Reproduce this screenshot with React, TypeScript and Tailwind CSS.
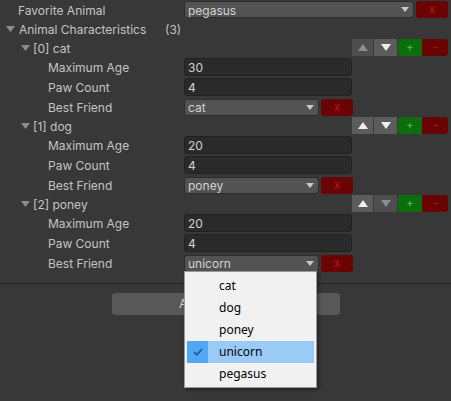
import React from "react";

const Tri = ({ down = true, color }: { down?: boolean; color: string }) => (
  <svg width="10" height="7" viewBox="0 0 10 7">
    {down ? <polygon points="0,0 10,0 5,7" fill={color} /> : <polygon points="0,7 10,7 5,0" fill={color} />}
  </svg>
);

const FoldTri = () => (
  <svg width="9" height="6" viewBox="0 0 9 6" className="shrink-0">
    <polygon points="0,0 9,0 4.5,6" fill="#8c8c8c" />
  </svg>
);

const Dropdown = ({ value, w }: { value: string; w: string }) => (
  <div className={`${w} h-[17px] bg-[#535353] border border-[#2c2c2c] rounded-[3px] flex items-center pl-[3px] pr-[4px] text-[#d2d2d2]`}>
    <span className="flex-1 leading-none pt-[2px]">{value}</span>
    <svg width="8" height="5" viewBox="0 0 8 5"><polygon points="0,0 8,0 4,5" fill="#c8c8c8" /></svg>
  </div>
);

const XBtn = ({ w }: { w: string }) => (
  <div className={`${w} h-[17px] ml-[2px] bg-[#6a0303] rounded-[3px] flex items-center justify-center text-[#c41212] text-[11px] leading-none`}>x</div>
);

const Field = ({ value }: { value: string }) => (
  <div className="w-[168px] h-[18px] bg-[#2a2a2a] border border-[#212121] rounded-[3px] flex items-center pl-[3px] pt-[2px] text-[#d2d2d2] leading-none">{value}</div>
);

const Row = ({ label, children, cls }: { label: string; children: React.ReactNode; cls: string }) => (
  <div className={`flex items-center h-[18px] ${cls}`}>
    <div className="w-[184px] pl-[48px] pt-[2px] text-[#c4c4c4] leading-none">{label}</div>
    {children}
  </div>
);

const Element = ({
  idx, name, age, paw, friend, upOn, downOn, first,
}: { idx: number; name: string; age: string; paw: string; friend: string; upOn: boolean; downOn: boolean; first: boolean }) => (
  <>
    <div className={`flex items-center h-[17px] ${first ? "mt-[2px]" : "mt-[1px]"}`}>
      <div className="pl-[21px] flex items-center gap-[3px] text-[#c4c4c4] leading-none">
        <FoldTri />
        <span className="pt-[2px]">[{idx}] {name}</span>
      </div>
      <div className="ml-auto mr-[3px] flex h-[17px]">
        <div className={`w-[21px] flex items-center justify-center ${upOn ? "bg-[#5c5c5c]" : "bg-[#4e4e4e]"}`}>
          <Tri down={false} color={upOn ? "#eeeeee" : "#8e8e8e"} />
        </div>
        <div className={`w-[23px] ml-[1px] flex items-center justify-center ${downOn ? "bg-[#5c5c5c]" : "bg-[#4e4e4e]"}`}>
          <Tri down color={downOn ? "#eeeeee" : "#8e8e8e"} />
        </div>
        <div className="w-[24px] ml-[1px] bg-[#0c6e0c] rounded-l-[3px] flex items-center justify-center text-[#3fd83f] text-[11px] leading-none">+</div>
        <div className="w-[26px] bg-[#6a0303] rounded-r-[3px] flex items-center justify-center text-[#c41212] text-[11px] leading-none">-</div>
      </div>
    </div>
    <Row label="Maximum Age" cls="mt-[2px]"><Field value={age} /></Row>
    <Row label="Paw Count" cls="mt-[2px]"><Field value={paw} /></Row>
    <Row label="Best Friend" cls="mt-[2px]">
      <Dropdown value={friend} w="w-[135px]" />
      <XBtn w="w-[32px]" />
    </Row>
  </>
);

export default function App() {
  const items = ["cat", "dog", "poney", "unicorn", "pegasus"];
  return (
    <div className="relative w-[451px] h-[401px] bg-[#383838] overflow-hidden text-[12px]" style={{ fontFamily: "Inter, 'Noto Sans', sans-serif" }}>
      <div className="pt-[1px]">
        <div className="flex items-center h-[17px]">
          <div className="w-[184px] pl-[18px] pt-[2px] text-[#c4c4c4] leading-none">Favorite Animal</div>
          <Dropdown value="pegasus" w="w-[230px]" />
          <XBtn w="w-[32px]" />
        </div>
        <div className="flex items-center h-[17px] mt-[2px] text-[#c4c4c4] leading-none">
          <div className="pl-[6px] flex items-center gap-[4px] w-[165px]">
            <FoldTri />
            <span className="pt-[2px]">Animal Characteristics</span>
          </div>
          <span className="pt-[2px]">(3)</span>
        </div>
        <Element first idx={0} name="cat" age="30" paw="4" friend="cat" upOn={false} downOn />
        <Element first={false} idx={1} name="dog" age="20" paw="4" friend="poney" upOn downOn />
        <Element first={false} idx={2} name="poney" age="20" paw="4" friend="unicorn" upOn downOn={false} />
      </div>
      <div className="mt-[11px] border-t border-[#242424]" />
      <div className="flex pl-[112px] mt-[9px]">
        <div className="w-[228px] h-[22px] bg-[#585858] rounded-[3px] flex items-center justify-center text-[#d2d2d2] leading-none">Add New Animal</div>
      </div>

      <div className="absolute left-[184px] top-[271px] w-[133px] h-[117px] bg-[#f1f1f1] border border-[#9a9a9a] shadow-[2px_2px_3px_rgba(0,0,0,0.35)] pt-[3px] px-[2px]" style={{ fontFamily: "'Noto Sans', sans-serif" }}>
        {items.map((it) => {
          const sel = it === "unicorn";
          return (
            <div key={it} className={`flex h-[22px] items-center ${sel ? "bg-[#99cbf6]" : ""}`}>
              <div className={`w-[21px] h-full flex items-center justify-center ${sel ? "bg-[#52a7f5]" : ""}`}>
                {sel && (
                  <svg width="10" height="8" viewBox="0 0 10 8"><polyline points="1,4 3.8,6.8 9,1" fill="none" stroke="#1d4f82" strokeWidth="1.5" /></svg>
                )}
              </div>
              <span className="pl-[11px] text-[12px] text-black leading-none">{it}</span>
            </div>
          );
        })}
      </div>
    </div>
  );
}
